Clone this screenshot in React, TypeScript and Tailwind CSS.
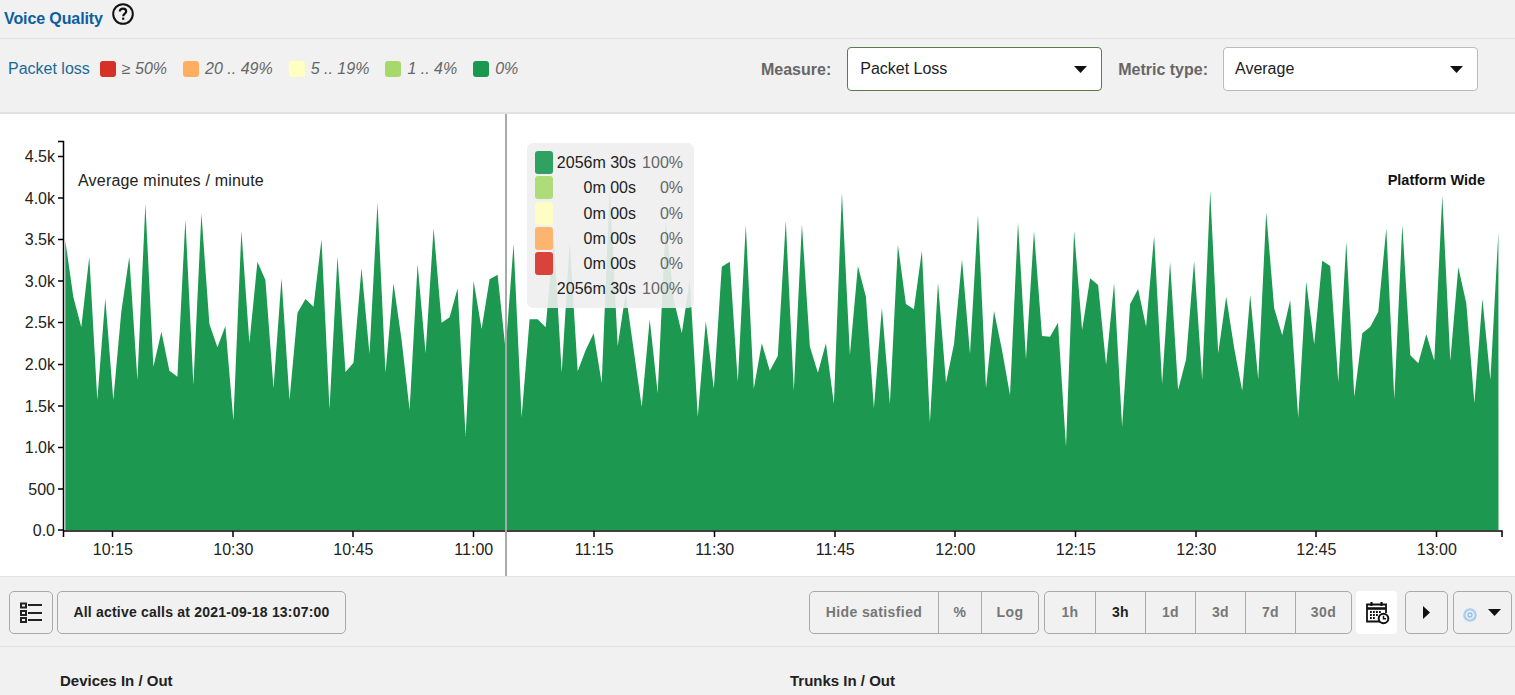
const lossColors = [
  { color: 'bg-[#d73027]', label: '≥ 50%' },
  { color: 'bg-[#fdae61]', label: '20 .. 49%' },
  { color: 'bg-[#ffffbf]', label: '5 .. 19%' },
  { color: 'bg-[#a6d96a]', label: '1 .. 4%' },
  { color: 'bg-[#1a9850]', label: '0%' },
];

const tooltipRows = [
  { color: 'bg-[#1a9850]/90', time: '2056m 30s', pct: '100%' },
  { color: 'bg-[#a6d96a]/90', time: '0m 00s', pct: '0%' },
  { color: 'bg-[#ffffbf]/90', time: '0m 00s', pct: '0%' },
  { color: 'bg-[#fdae61]/90', time: '0m 00s', pct: '0%' },
  { color: 'bg-[#d73027]/90', time: '0m 00s', pct: '0%' },
  { color: '', time: '2056m 30s', pct: '100%' },
];

const yTicks = [
  { label: '4.5k', y: 156.5 },
  { label: '4.0k', y: 198 },
  { label: '3.5k', y: 239.5 },
  { label: '3.0k', y: 281 },
  { label: '2.5k', y: 322.5 },
  { label: '2.0k', y: 364.5 },
  { label: '1.5k', y: 406 },
  { label: '1.0k', y: 447.5 },
  { label: '500', y: 489 },
  { label: '0.0', y: 530 },
];

const xTicks = [
  { label: '10:15', x: 112.5 },
  { label: '10:30', x: 233 },
  { label: '10:45', x: 353 },
  { label: '11:00', x: 473.5 },
  { label: '11:15', x: 594 },
  { label: '11:30', x: 714.5 },
  { label: '11:45', x: 835 },
  { label: '12:00', x: 955 },
  { label: '12:15', x: 1075.5 },
  { label: '12:30', x: 1196 },
  { label: '12:45', x: 1316 },
  { label: '13:00', x: 1436.5 },
];

// one sample per minute, height in thirds of a pixel below y=180
const samples = [
  182, 350, 442, 230, 660, 355, 660, 395, 230, 600, 72, 560, 455, 572, 590, 118, 615, 100, 432, 502, 438, 722, 152, 490,
  245, 300, 625, 295, 660, 398, 357, 380, 178, 688, 230, 576,
  548, 265, 522, 68, 578, 310, 480, 690, 253, 520, 145, 428, 412, 325, 768, 303, 447, 298, 284, 510, 192, 712, 418, 418,
  442, 170, 578, 186, 574, 510, 460, 610, 21, 498, 339, 510,
  680, 418, 640, 120, 360, 460, 300, 710, 423, 626, 260, 245, 606, 135, 626, 490, 572, 528, 122, 632, 133, 500, 578,
  490, 672, 38, 525, 258, 350, 685, 383, 672, 195, 372, 388,
  212, 728, 308, 608, 492, 238, 522, 105, 625, 393, 510, 645, 127, 538, 153, 468, 470, 428, 800, 153, 450, 295, 315,
  555, 310, 740, 372, 327, 440, 168, 612, 247, 630, 538, 243, 600,
  33, 520, 350, 505, 632, 345, 598, 97, 385, 466, 360, 713, 305, 493, 242, 258, 607, 185, 650, 460, 440, 395, 145, 658,
  135, 526, 550, 463, 542, 47, 543, 262, 370, 670, 356, 600, 157,
];

const areaPoints = [
  '65.3,530',
  ...samples.map((v, i) => `${(65.3 + i * 8.006).toFixed(1)},${(180 + v / 3).toFixed(1)}`),
  '1498.5,530',
].join(' ');

const Chart = () => (
  <div className="relative h-[462px] bg-white">
    <svg viewBox="0 114 1515 462" className="block h-[462px] w-[1515px] font-['Liberation_Sans',sans-serif]">
      <polygon points={areaPoints} fill="#1c9850" />
      <path d="M58 141.5H63.5V531M63.5 531V537M63.5 531H1502V537" fill="none" stroke="#000" strokeWidth="1.5" />
      {yTicks.map((t) => (
        <g key={t.label}>
          <line x1="58" x2="63" y1={t.y} y2={t.y} stroke="#000" strokeWidth="1.5" />
          <text x="55" y={t.y + 5.5} textAnchor="end" className="fill-[#222] text-[16px]">
            {t.label}
          </text>
        </g>
      ))}
      {xTicks.map((t) => (
        <g key={t.label}>
          <line x1={t.x} x2={t.x} y1="531" y2="537" stroke="#000" strokeWidth="1.5" />
          <text x={t.x + 0.3} y="555" textAnchor="middle" className="fill-[#222] text-[16px]">
            {t.label}
          </text>
        </g>
      ))}
      <text x="78" y="186" className="fill-[#222] text-[16px] tracking-[0.2px]">
        Average minutes / minute
      </text>
      <text x="1485" y="185" textAnchor="end" className="fill-[#111] text-[14.5px] font-bold">
        Platform Wide
      </text>
      <line x1="506" x2="506" y1="114" y2="576" stroke="#a9a9a9" strokeWidth="2" />
    </svg>
    <div className="absolute left-[527px] top-[29px] h-[165px] w-[167px] rounded-[6px] bg-[#eeeeee]/90 pl-[8px] pt-[7px] text-[16px] leading-[25px]">
      {tooltipRows.map((row, i) => (
        <div key={i} className="flex h-[25.25px] items-center">
          <span className={`h-[23px] w-[18px] rounded-[3px] ${row.color}`} />
          <span className="w-[83px] text-right text-[#222]">{row.time}</span>
          <span className="w-[47px] text-right text-[#666]">{row.pct}</span>
        </div>
      ))}
    </div>
  </div>
);

const Caret = () => (
  <svg width="13" height="7" viewBox="0 0 13 7">
    <path d="M0 0H13L6.5 7Z" fill="#111" />
  </svg>
);

const Dropdown = ({ value, className }: { value: string; className: string }) => (
  <div className={`flex h-[44px] w-[255px] items-center justify-between rounded-[4px] border bg-white pr-[14px] text-[#222] ${className}`}>
    <span>{value}</span>
    <Caret />
  </div>
);

const GroupButton = ({ label, width, active }: { label: string; width: string; active?: boolean }) => (
  <div className={`flex h-full items-center justify-center border-l border-[#aaa] first:border-l-0 ${width} ${active ? 'text-[#222]' : 'text-[#777]'}`}>
    {label}
  </div>
);

const App = () => {
  return (
    <div className="h-[695px] w-[1515px] overflow-hidden bg-[#f1f1f1] font-['Liberation_Sans',sans-serif] text-[16px]">
      <header className="flex h-[39px] border-b border-[#e2e2e2] pl-[4px]">
        <h1 className="mt-[10px] text-[16px] font-bold leading-[18px] tracking-[-0.1px] text-[#0b5f9e]">Voice Quality</h1>
        <svg width="24" height="24" viewBox="0 0 24 24" className="ml-[8px] mt-[2px]">
          <circle cx="12" cy="12" r="9.8" fill="none" stroke="#111" strokeWidth="2" />
          <path
            d="M8.8 9.6C8.8 7.7 10.2 6.6 12 6.6C13.9 6.6 15.2 7.7 15.2 9.4C15.2 11.6 12.2 11.6 12.2 14.2"
            fill="none"
            stroke="#111"
            strokeWidth="2.2"
          />
          <rect x="11.1" y="15.6" width="2.2" height="2.2" fill="#111" />
        </svg>
      </header>

      <section className="flex h-[75px] items-start border-b-2 border-[#e2e2e2] pl-[8px] pr-[37px]">
        <div className="mt-[18px] flex items-center gap-[16px] text-[#666]">
          <span className="mr-[-6px] text-[#1a6a96]">Packet loss</span>
          {lossColors.map((item) => (
            <div key={item.label} className="flex items-center gap-[6px]">
              <span className={`h-[16px] w-[16px] rounded-[3px] ${item.color}`} />
              <span className="italic">{item.label}</span>
            </div>
          ))}
        </div>
        <div className="ml-auto mt-[8px] flex items-center gap-[16px]">
          <span className="mt-[2px] font-bold text-[#666]">Measure:</span>
          <Dropdown value="Packet Loss" className="border-[#5b7b4c] pl-[12px]" />
          <span className="mr-[-1px] mt-[2px] font-bold text-[#666]">Metric type:</span>
          <Dropdown value="Average" className="border-[#bbbbbb] pl-[11px]" />
        </div>
      </section>

      <Chart />

      <section className="flex h-[71px] items-center border-y border-[#e2e2e2] pl-[9px] pr-[3px] pt-[2px] text-[14px] font-bold tracking-[0.4px]">
        <button className="flex h-[43px] w-[44px] items-center justify-center rounded-[5px] border border-[#aaa]">
          <svg width="24" height="21" viewBox="0 0 24 21" fill="none" stroke="#222" strokeWidth="2">
            <rect x="2" y="1.5" width="5" height="4" />
            <rect x="2" y="9" width="5" height="4" />
            <rect x="2" y="16" width="5" height="4" />
            <path d="M9 3H23M9 11H23M9 18H23" />
          </svg>
        </button>
        <button className="ml-[4px] h-[43px] w-[289px] rounded-[5px] border border-[#aaa] tracking-[0.2px] text-[#222]">
          All active calls at 2021-09-18 13:07:00
        </button>

        <div className="ml-auto flex h-[43px] overflow-hidden rounded-[5px] border border-[#aaa]">
          <GroupButton label="Hide satisfied" width="w-[128px]" />
          <GroupButton label="%" width="w-[43px]" />
          <GroupButton label="Log" width="w-[57px]" />
        </div>
        <div className="ml-[5px] flex h-[43px] overflow-hidden rounded-[5px] border border-[#aaa]">
          <GroupButton label="1h" width="w-[50px]" />
          <GroupButton label="3h" width="w-[50px]" active />
          <GroupButton label="1d" width="w-[50px]" />
          <GroupButton label="3d" width="w-[50px]" />
          <GroupButton label="7d" width="w-[50px]" />
          <GroupButton label="30d" width="w-[56px]" />
        </div>
        <button className="ml-[4px] flex h-[43px] w-[41px] items-center justify-center rounded-[4px] bg-white">
          <svg width="25" height="24" viewBox="0 0 25 24" fill="none" stroke="#111" strokeWidth="1.8" className="ml-[2px]">
            <path d="M18 20.5H2V3.5H21V12" />
            <path d="M2 7.5H21" strokeWidth="2.6" />
            <path d="M6.5 1V5M16.5 1V5" strokeWidth="2.2" />
            <path d="M5 11H17M5 14H14M5 17H11" strokeWidth="2" strokeDasharray="1.8 1.2" />
            <circle cx="18.5" cy="17.5" r="4.8" fill="#fff" strokeWidth="2" />
            <path d="M18.5 14.8V17.8H21" strokeWidth="1.5" />
          </svg>
        </button>
        <button className="ml-[8px] flex h-[43px] w-[43px] items-center justify-center rounded-[5px] border border-[#aaa]">
          <svg width="7" height="13" viewBox="0 0 7 13">
            <path d="M0 0L7 6.5L0 13Z" fill="#111" />
          </svg>
        </button>
        <button className="ml-[5px] flex h-[43px] w-[59px] items-center rounded-[5px] border border-[#aaa] pl-[9px]">
          <svg width="14" height="14" viewBox="0 0 14 14" fill="none" className="mt-[5px]">
            <circle cx="7" cy="7" r="5.6" stroke="#a9cdf0" strokeWidth="2.4" />
            <circle cx="7" cy="7" r="2" stroke="#8fbdea" strokeWidth="1.4" />
          </svg>
          <span className="ml-[11px] flex">
            <Caret />
          </span>
        </button>
      </section>

      <section className="flex pl-[60px] pt-[25px] text-[15px] font-bold leading-[17px] text-[#222]">
        <h2 className="w-[730px]">Devices In / Out</h2>
        <h2>Trunks In / Out</h2>
      </section>
    </div>
  );
};

export default App;
